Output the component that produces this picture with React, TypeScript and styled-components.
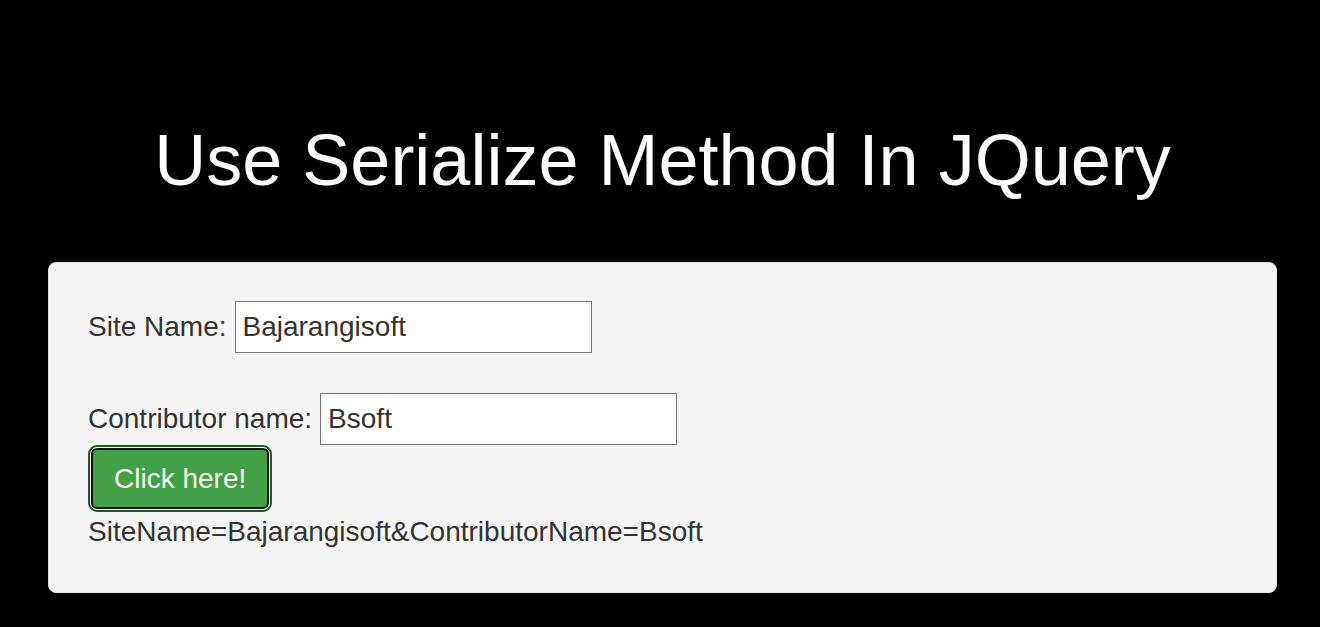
import React from "react";
import styled, { createGlobalStyle } from "styled-components";

const Global = createGlobalStyle`
  html, body {
    margin: 0;
    padding: 0;
    background: #000;
    font-family: "Liberation Sans", Arial, sans-serif;
  }
  * { box-sizing: border-box; }
`;

const Page = styled.div`
  padding: 0 43px 0 48px;
`;

const Title = styled.h1`
  margin: 121px 0 62px;
  font-size: 72px;
  line-height: 79px;
  font-weight: normal;
  color: #fff;
  text-align: center;
`;

const Well = styled.div`
  background: #f5f5f5;
  border: 1px solid #e3e3e3;
  border-radius: 8px;
  padding: 38px 39px 40px;
  color: #333;
  font-size: 28px;
  line-height: 40px;
`;

const Row = styled.div<{ $gap?: number }>`
  display: flex;
  align-items: center;
  gap: 8px;
  margin-bottom: ${(p) => p.$gap ?? 0}px;
`;

const Label = styled.label`
  font-size: 28px;
  color: #333;
`;

const Input = styled.input`
  width: 357px;
  height: 52px;
  border: 1px solid #767676;
  background: #fff;
  padding: 0 7px;
  font-family: "Liberation Sans", Arial, sans-serif;
  font-size: 28px;
  color: #333;
  outline: none;
`;

const Button = styled.button`
  display: block;
  margin: 3px 0 3px 3px;
  height: 61px;
  padding: 0 21px;
  background: #43a047;
  color: #f3fff3;
  border: 2px solid #111;
  border-radius: 6px;
  box-shadow: 0 0 0 1px #fff, 0 0 0 3px #1d5c22;
  font-family: "Liberation Sans", Arial, sans-serif;
  font-size: 28px;
  cursor: pointer;
`;

const Result = styled.div`
  color: #333;
  font-size: 28px;
  line-height: 40px;
`;

export default function App() {
  return (
    <>
      <Global />
      <Page>
        <Title>Use Serialize Method In JQuery</Title>
        <Well>
          <Row $gap={40}>
            <Label>Site Name:</Label>
            <Input defaultValue="Bajarangisoft" />
          </Row>
          <Row>
            <Label>Contributor name:</Label>
            <Input defaultValue="Bsoft" />
          </Row>
          <Button>Click here!</Button>
          <Result>SiteName=Bajarangisoft&amp;ContributorName=Bsoft</Result>
        </Well>
      </Page>
    </>
  );
}
